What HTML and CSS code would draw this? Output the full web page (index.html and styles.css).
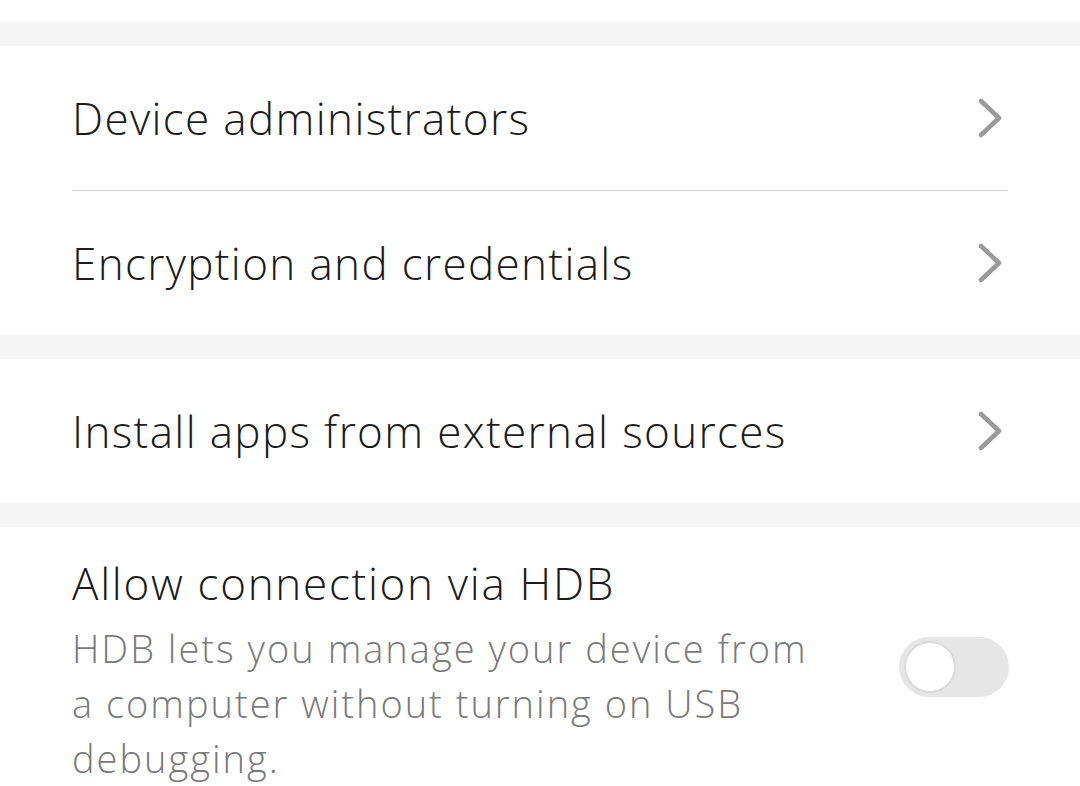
FILE: index.html
```html
<!DOCTYPE html>
<html>
<head>
<meta charset="utf-8">
<link rel="stylesheet" href="styles.css">
</head>
<body>
<div class="top"></div>
<div class="band"></div>
<div class="group">
  <div class="row">
    <span class="label">Device administrators</span>
    <svg class="chev" width="36" height="40" viewBox="0 0 36 40"><polyline points="8,3 26,20 8,37" fill="none" stroke="#9a9a9a" stroke-width="4.5" stroke-linecap="round" stroke-linejoin="round"/></svg>
  </div>
  <div class="divider"></div>
  <div class="row">
    <span class="label">Encryption and credentials</span>
    <svg class="chev" width="36" height="40" viewBox="0 0 36 40"><polyline points="8,3 26,20 8,37" fill="none" stroke="#9a9a9a" stroke-width="4.5" stroke-linecap="round" stroke-linejoin="round"/></svg>
  </div>
</div>
<div class="band"></div>
<div class="group">
  <div class="row">
    <span class="label">Install apps from external sources</span>
    <svg class="chev" width="36" height="40" viewBox="0 0 36 40"><polyline points="8,3 26,20 8,37" fill="none" stroke="#9a9a9a" stroke-width="4.5" stroke-linecap="round" stroke-linejoin="round"/></svg>
  </div>
</div>
<div class="band"></div>
<div class="group">
  <div class="row-sw">
    <div class="texts">
      <div class="label">Allow connection via HDB</div>
      <div class="sub">HDB lets you manage your device from a computer without turning on USB debugging.</div>
    </div>
    <div class="switch"><div class="knob"></div></div>
  </div>
</div>
</body>
</html>
```
FILE: styles.css
```css
html, body {
  margin: 0;
  padding: 0;
  background: #ffffff;
  overflow: hidden;
}
body {
  font-family: "Open Sans", "Noto Sans", sans-serif;
  font-weight: 300;
  width: 1080px;
  height: 786px;
}
.top {
  height: 22px;
}
.band {
  height: 24px;
  background: #f5f5f5;
}
.group {
  background: #ffffff;
}
.row {
  height: 144px;
  padding: 0 72px;
  display: flex;
  align-items: center;
  justify-content: space-between;
}
.label {
  font-size: 44px;
  color: #1b1b1b;
  line-height: 52px;
  letter-spacing: 1.35px;
}
.row-sw .label {
  letter-spacing: 1.7px;
}
.chev {
  margin-right: -1px;
  display: block;
}
.divider {
  height: 1px;
  background: #d4d4d4;
  margin: 0 72px;
}
.row-sw {
  padding: 30px 71px 0 72px;
  display: flex;
  align-items: center;
  justify-content: space-between;
}
.texts {
  width: 750px;
  flex: none;
}
.sub {
  font-size: 38px;
  line-height: 55px;
  color: #7a7a7a;
  margin-top: 12px;
  letter-spacing: 2px;
}
.switch {
  width: 110px;
  height: 60px;
  border-radius: 30px;
  background: #e6e6e6;
  position: relative;
  flex: none;
  margin-top: -10px;
}
.knob {
  position: absolute;
  left: 5px;
  top: 4px;
  width: 48px;
  height: 48px;
  border-radius: 50%;
  background: #ffffff;
  border: 2px solid #dadada;
}
```
